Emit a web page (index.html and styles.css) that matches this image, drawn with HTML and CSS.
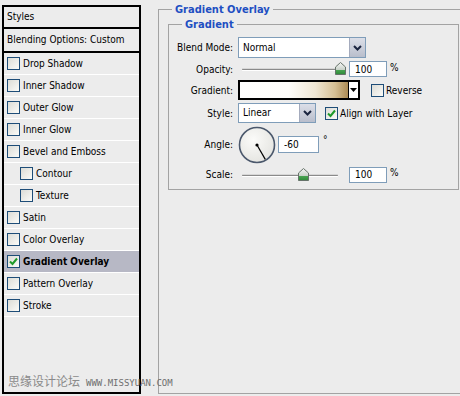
FILE: index.html
```html
<!DOCTYPE html>
<html lang="en">
<head>
    <meta charset="UTF-8">
    <title>Layer Style - Gradient Overlay</title>
    <link rel="stylesheet" href="styles.css">
</head>
<body>
    <div class="dialog">
        <div class="styles-panel">
            <div class="panel-head">Styles</div>
            <div class="panel-head">Blending Options: Custom</div>
            <ul class="effect-list">
                <li class="effect"><span class="check"></span>Drop Shadow</li>
                <li class="effect"><span class="check"></span>Inner Shadow</li>
                <li class="effect"><span class="check"></span>Outer Glow</li>
                <li class="effect"><span class="check"></span>Inner Glow</li>
                <li class="effect"><span class="check"></span>Bevel and Emboss</li>
                <li class="effect sub"><span class="check"></span>Contour</li>
                <li class="effect sub"><span class="check"></span>Texture</li>
                <li class="effect"><span class="check"></span>Satin</li>
                <li class="effect"><span class="check"></span>Color Overlay</li>
                <li class="effect selected">
                    <span class="check">
                        <svg width="11" height="11" viewBox="0 0 11 11"><path d="M2 5.5 L4.5 8 L9 2.5" fill="none" stroke="#1f9a2a" stroke-width="2"/></svg>
                    </span>Gradient Overlay
                </li>
                <li class="effect"><span class="check"></span>Pattern Overlay</li>
                <li class="effect"><span class="check"></span>Stroke</li>
            </ul>
        </div>

        <fieldset class="group outer">
            <legend>Gradient Overlay</legend>
            <fieldset class="group inner">
                <legend>Gradient</legend>
                <div class="opts">
                    <label>Blend Mode:</label>
                    <div class="ctl">
                        <div class="select blend">
                            <span class="select-val">Normal</span>
                            <span class="select-btn">
                                <svg width="9" height="6" viewBox="0 0 9 6"><path d="M1 1 L4.5 4.5 L8 1" fill="none" stroke="#1b2540" stroke-width="2"/></svg>
                            </span>
                        </div>
                    </div>

                    <label>Opacity:</label>
                    <div class="ctl">
                        <div class="slider">
                            <div class="track"></div>
                            <svg class="thumb" style="left: 97px" width="11" height="13" viewBox="0 0 11 13">
                                <defs>
                                    <linearGradient id="tg1" x1="0" y1="0" x2="0" y2="1">
                                        <stop offset="0" stop-color="#f6f6f6"/>
                                        <stop offset="0.6" stop-color="#c9d2c9"/>
                                        <stop offset="0.61" stop-color="#4aa552"/>
                                        <stop offset="1" stop-color="#2e8a38"/>
                                    </linearGradient>
                                </defs>
                                <path d="M5.5 0.5 L10.5 5 L10.5 12.5 L0.5 12.5 L0.5 5 Z" fill="url(#tg1)" stroke="#66736a"/>
                            </svg>
                        </div>
                        <input class="num" type="text" value="100" readonly>
                        <span class="unit">%</span>
                    </div>

                    <label>Gradient:</label>
                    <div class="ctl">
                        <div class="grad">
                            <span class="grad-fill"></span>
                            <span class="grad-btn">
                                <svg width="7" height="4" viewBox="0 0 7 4"><path d="M0 0 H7 L3.5 4 Z" fill="#000"/></svg>
                            </span>
                        </div>
                        <span class="check reverse"></span>
                        <span class="opt-text">Reverse</span>
                    </div>

                    <label>Style:</label>
                    <div class="ctl">
                        <div class="select style">
                            <span class="select-val">Linear</span>
                            <span class="select-btn">
                                <svg width="9" height="6" viewBox="0 0 9 6"><path d="M1 1 L4.5 4.5 L8 1" fill="none" stroke="#1b2540" stroke-width="2"/></svg>
                            </span>
                        </div>
                        <span class="check align">
                            <svg width="11" height="11" viewBox="0 0 11 11"><path d="M2 5.5 L4.5 8 L9 2.5" fill="none" stroke="#1f9a2a" stroke-width="2"/></svg>
                        </span>
                        <span class="opt-text">Align with Layer</span>
                    </div>

                    <label>Angle:</label>
                    <div class="ctl">
                        <svg class="dial" width="38" height="38" viewBox="0 0 38 38">
                            <defs>
                                <radialGradient id="dg" cx="0.4" cy="0.35" r="0.7">
                                    <stop offset="0" stop-color="#fbfbf9"/>
                                    <stop offset="1" stop-color="#e4e4e0"/>
                                </radialGradient>
                            </defs>
                            <circle cx="19" cy="19" r="17.5" fill="url(#dg)" stroke="#4b586c" stroke-width="1.6"/>
                            <line x1="19" y1="19" x2="27.3" y2="33.4" stroke="#000" stroke-width="1.2"/>
                            <circle cx="19" cy="19" r="1.6" fill="#000"/>
                        </svg>
                        <input class="num angle" type="text" value="-60" readonly>
                        <span class="degree">°</span>
                    </div>

                    <label>Scale:</label>
                    <div class="ctl">
                        <div class="slider">
                            <div class="track"></div>
                            <svg class="thumb" style="left: 60px" width="11" height="13" viewBox="0 0 11 13">
                                <defs>
                                    <linearGradient id="tg2" x1="0" y1="0" x2="0" y2="1">
                                        <stop offset="0" stop-color="#f6f6f6"/>
                                        <stop offset="0.6" stop-color="#c9d2c9"/>
                                        <stop offset="0.61" stop-color="#4aa552"/>
                                        <stop offset="1" stop-color="#2e8a38"/>
                                    </linearGradient>
                                </defs>
                                <path d="M5.5 0.5 L10.5 5 L10.5 12.5 L0.5 12.5 L0.5 5 Z" fill="url(#tg2)" stroke="#66736a"/>
                            </svg>
                        </div>
                        <input class="num" type="text" value="100" readonly>
                        <span class="unit">%</span>
                    </div>
                </div>
            </fieldset>
        </fieldset>
    </div>

    <div class="watermark">
        <span class="wm-cn">思缘设计论坛</span>
        <span class="wm-url">WWW.MISSYUAN.COM</span>
    </div>
</body>
</html>
```

FILE: styles.css
```css
body {
    margin: 0;
    width: 460px;
    height: 396px;
    overflow: hidden;
    position: relative;
    background-color: #ececec;
    font-family: "DejaVu Sans", "Liberation Sans", sans-serif;
    font-stretch: condensed;
    font-size: 10px;
    color: #000;
}

.dialog {
    display: flex;
    align-items: flex-start;
    padding: 3px 0 0 2px;
}

/* left list of styles */
.styles-panel {
    width: 139px;
    height: 389px;
    margin-top: 2px;
    box-sizing: border-box;
    border: 2px solid #000;
    flex-shrink: 0;
}

.panel-head {
    height: 20px;
    line-height: 20px;
    padding-left: 3px;
    border-bottom: 2px solid #000;
    white-space: nowrap;
}

.panel-head + .panel-head {
    height: 22px;
    line-height: 22px;
}

.effect-list {
    list-style: none;
    margin: 0;
    padding: 0;
}

.effect {
    display: flex;
    align-items: center;
    gap: 3px;
    height: 21px;
    padding-left: 3px;
    border-bottom: 1px solid #fff;
    white-space: nowrap;
}

.effect.sub {
    padding-left: 16px;
}

.effect.selected {
    background-color: #b7b8c5;
    font-weight: bold;
}

.check {
    display: inline-flex;
    align-items: center;
    justify-content: center;
    width: 13px;
    height: 13px;
    box-sizing: border-box;
    border: 1px solid #1e4d78;
    background: linear-gradient(135deg, #dcdcd6, #fbfbf8);
    flex-shrink: 0;
}

/* right side group boxes */
.group {
    margin: 0;
    padding: 0;
    border: 1px solid #a3a3a3;
    min-width: 0;
}

.group legend {
    padding: 0 3px;
    line-height: 13px;
    font-size: 11px;
    font-weight: bold;
    color: #1e4fc2;
}

.outer {
    margin-left: 17px;
    width: 302px;
    height: 391px;
    box-sizing: border-box;
    border-right: none;
    flex-shrink: 0;
}

.outer > legend {
    margin-left: 13px;
}

.inner {
    margin: 2px 0 0 9px;
    width: 291px;
    box-sizing: border-box;
}

.inner > legend {
    margin-left: 13px;
}

.opts {
    display: grid;
    grid-template-columns: 64px 1fr;
    grid-template-rows: 21px 16px 20px 20px 37px 17px;
    row-gap: 3px;
    column-gap: 5px;
    align-items: center;
    padding: 6px 0 6px 0;
}

.opts label {
    text-align: right;
    white-space: nowrap;
}

.ctl {
    display: flex;
    align-items: center;
    height: 100%;
}

.select {
    display: flex;
    height: 21px;
    box-sizing: border-box;
    border: 1px solid #7f9db9;
    background: #fff;
}

.select.blend {
    width: 128px;
}

.select.style {
    width: 78px;
    height: 20px;
}

.select-val {
    flex: 1;
    padding-left: 4px;
    line-height: 19px;
}

.select.style .select-val {
    line-height: 18px;
}

.select-btn {
    width: 15px;
    display: flex;
    align-items: center;
    justify-content: center;
    border-left: 1px solid #a4abbd;
    background: linear-gradient(#dcdfe8, #b9becc);
}

.slider {
    position: relative;
    width: 107px;
    height: 16px;
    margin-right: 4px;
    display: flex;
    align-items: center;
}

.track {
    width: 96px;
    height: 1px;
    margin: 1px 0 0 4px;
    background: #8a8a8a;
    box-shadow: 0 1px 0 #fff, 0 -1px 0 #d6d6d6;
    border-radius: 1px;
}

.thumb {
    position: absolute;
    top: 1px;
}

.num {
    width: 38px;
    height: 16px;
    box-sizing: border-box;
    margin: 0;
    padding: 0 0 0 5px;
    border: 1px solid #7f9db9;
    background: #fff;
    font: inherit;
    color: #000;
    outline: none;
}

.num.angle {
    width: 41px;
    height: 17px;
    margin-left: 2px;
}

.unit {
    margin-left: 3px;
    margin-bottom: 4px;
}

.degree {
    margin-left: 4px;
    margin-bottom: 10px;
}

.grad {
    display: flex;
    width: 122px;
    height: 20px;
    box-sizing: border-box;
    border: 2px solid #000;
}

.grad-fill {
    flex: 1;
    background: linear-gradient(90deg, #fff 0%, #fefdfa 45%, #efe6d2 70%, #d6c094 88%, #ad8c55 100%);
    border-right: 1px solid #000;
}

.grad-btn {
    width: 9px;
    display: flex;
    align-items: center;
    justify-content: center;
    background: #fff;
}

.check.reverse {
    margin-left: 11px;
}

.check.align {
    margin-left: 9px;
}

.opt-text {
    margin-left: 2px;
    white-space: nowrap;
}

.dial {
    flex-shrink: 0;
}

/* watermark over the bottom edge */
.watermark {
    position: absolute;
    left: 8px;
    top: 372px;
    display: flex;
    align-items: baseline;
    gap: 6px;
    color: #8a8a8a;
    white-space: nowrap;
}

.wm-cn {
    font-family: "Noto Sans CJK SC", sans-serif;
    font-size: 12px;
    font-stretch: normal;
}

.wm-url {
    font-family: "DejaVu Sans Mono", monospace;
    font-size: 9px;
    font-stretch: normal;
    color: #6e6e6e;
}
```
